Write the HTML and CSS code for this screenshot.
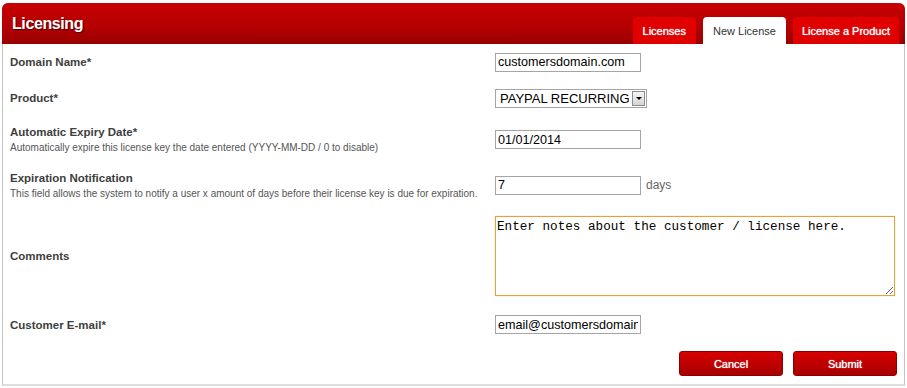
FILE: index.html
```html
<!DOCTYPE html>
<html lang="en">
<head>
    <meta charset="UTF-8">
    <meta name="viewport" content="width=device-width, initial-scale=1.0">
    <title>Licensing - New License</title>
    <link rel="stylesheet" href="styles.css">
</head>
<body>

<div class="panel">
    <div class="panel-header">
        <h1>Licensing</h1>
        <ul class="tabs">
            <li class="tab">Licenses</li>
            <li class="tab active">New License</li>
            <li class="tab">License a Product</li>
        </ul>
    </div>

    <form class="license-form">
        <div class="form-grid">
            <div class="label"><strong>Domain Name*</strong></div>
            <div class="field"><input class="text" type="text" value="customersdomain.com"></div>

            <div class="label"><strong>Product*</strong></div>
            <div class="field">
                <div class="select">
                    <span class="select-value">PAYPAL RECURRING</span>
                    <span class="select-arrow"></span>
                </div>
            </div>

            <div class="label">
                <strong>Automatic Expiry Date*</strong>
                <small>Automatically expire this license key the date entered (YYYY-MM-DD / 0 to disable)</small>
            </div>
            <div class="field"><input class="text" type="text" value="01/01/2014"></div>

            <div class="label">
                <strong>Expiration Notification</strong>
                <small>This field allows the system to notify a user x amount of days before their license key is due for expiration.</small>
            </div>
            <div class="field"><input class="text" type="text" value="7"> <span class="unit">days</span></div>

            <div class="label"><strong>Comments</strong></div>
            <div class="field"><textarea class="notes">Enter notes about the customer / license here.</textarea></div>

            <div class="label"><strong>Customer E-mail*</strong></div>
            <div class="field"><input class="text" type="text" value="email@customersdomain.com"></div>
        </div>

        <div class="actions">
            <button type="button" class="btn">Cancel</button>
            <button type="button" class="btn">Submit</button>
        </div>
    </form>
</div>

</body>
</html>
```

FILE: styles.css
```css
body {
    margin: 0;
    background-color: #ffffff;
    font-family: 'Liberation Sans', Arial, sans-serif;
    color: #444444;
}

.panel {
    margin: 3px 2px 0 2px;
    border: 1px solid #c4c4c4;
    border-bottom: 2px solid #dddddd;
    border-radius: 6px 6px 0 0;
    background-color: #ffffff;
}

.panel-header {
    display: flex;
    justify-content: space-between;
    align-items: flex-end;
    height: 41px;
    margin: -1px -1px 0 -1px;
    padding: 0 6px 0 10px;
    border-radius: 6px 6px 0 0;
    background: linear-gradient(#c80000 0%, #b40000 60%, #980000 100%); /* red title bar */
}

.panel-header h1 {
    align-self: center;
    margin: 0;
    font-size: 16px;
    font-weight: bold;
    letter-spacing: -0.4px;
    color: #ffffff;
    text-shadow: 1px 1px 1px #3a0000;
}

.tabs {
    display: flex;
    gap: 7px;
    margin: 0;
    padding: 0;
    list-style: none;
}

.tab {
    height: 27px;
    line-height: 29px;
    padding: 0 10px;
    border-radius: 4px 4px 0 0;
    background-color: #e00000;
    font-size: 11px;
    color: #ffffff;
    text-shadow: 0 0 1px #ffffff;
}

.tab:last-child {
    padding: 0 9px;
}

.tab.active {
    padding: 0 10px;
    background-color: #ffffff;
    color: #333333;
    text-shadow: none;
}

.license-form {
    padding: 0 7px 8px 7px;
}

.form-grid {
    display: grid;
    grid-template-columns: 485px 1fr;
    grid-template-rows: 36px 36px 47px 44px 97px 41px;
    align-items: center;
}

.label strong {
    display: block;
    font-size: 11.5px;
    color: #3e3e3e;
}

.label small {
    display: block;
    margin-top: 4px;
    font-size: 10px;
    color: #555555;
}

.field {
    display: flex;
    align-items: center;
    font-size: 12px;
}

.text {
    box-sizing: border-box;
    width: 146px;
    height: 19px;
    margin: 0;
    padding: 1px 2px;
    border: 1px solid #a5a5a5;
    font-family: 'Liberation Sans', Arial, sans-serif;
    font-size: 12.6px;
    color: #000000;
}

.unit {
    margin-left: 5px;
    color: #666666;
}

.select {
    display: flex;
    align-items: center;
    box-sizing: border-box;
    width: 152px;
    height: 19px;
    border: 1px solid #a5a5a5;
    font-size: 13px;
    color: #000000;
}

.select-value {
    flex: 1;
    overflow: hidden;
    padding-left: 4px;
    white-space: nowrap;
}

.select-arrow {
    position: relative;
    box-sizing: border-box;
    width: 13px;
    height: 15px;
    margin: 0 1px 0 1px;
    border: 1px solid #8c8c8c;
    background: linear-gradient(#f6f6f6, #d4d4d4);
}

/* small down arrow inside the select button */
.select-arrow::after {
    content: "";
    position: absolute;
    left: 3px;
    top: 5px;
    border-left: 3px solid transparent;
    border-right: 3px solid transparent;
    border-top: 3px solid #000000;
}

.notes {
    box-sizing: border-box;
    width: 400px;
    height: 80px;
    margin: 0;
    padding: 2px 1px;
    border: 1px solid #e0a33d;
    box-shadow: 0 0 1px #f0c070;
    font-family: 'Liberation Mono', 'Courier New', monospace;
    font-size: 12.65px;
    color: #000000;
    outline: none;
}

.actions {
    display: flex;
    justify-content: flex-end;
    gap: 10px;
    margin-top: 6px;
}

.btn {
    width: 104px;
    height: 25px;
    border: 1px solid #8a0000;
    border-radius: 3px;
    background: linear-gradient(#d80000, #a60000);
    font-family: 'Liberation Sans', Arial, sans-serif;
    font-size: 11px;
    color: #ffffff;
    text-shadow: 0 0 1px #ffffff;
    cursor: pointer;
}
```
